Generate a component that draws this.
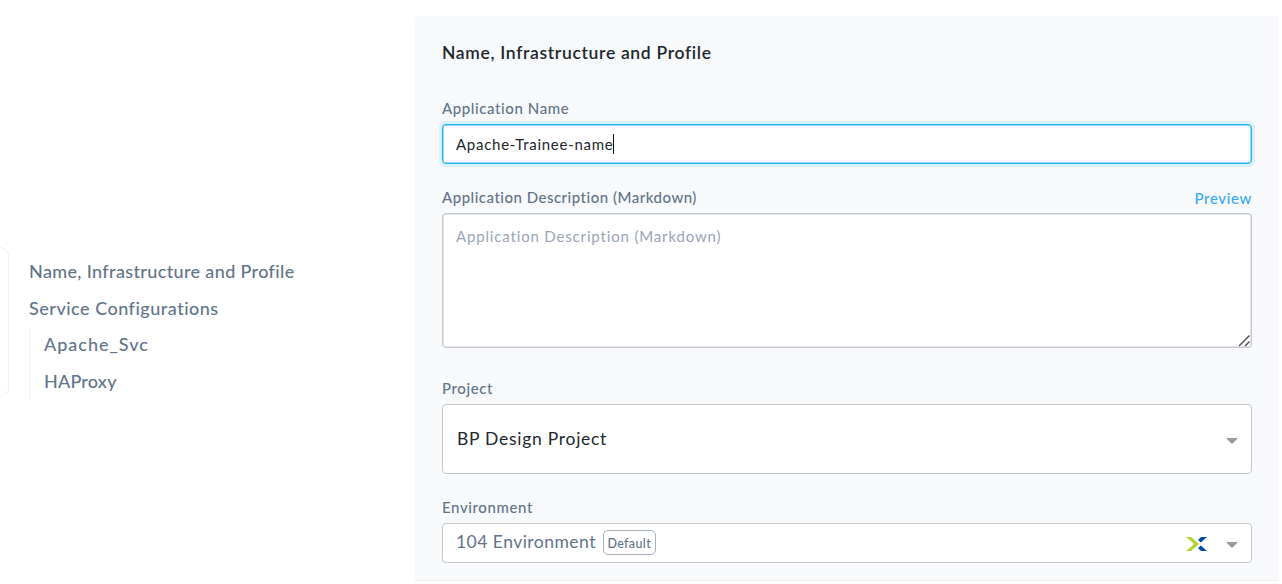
<div class="page">
  <aside>
    <div class="rail"></div>
    <nav>
      <span class="item first">Name, Infrastructure and Profile</span>
      <span class="item service">Service Configurations</span>
      <div class="sub">
        <span class="item apache">Apache_Svc</span>
        <span class="item haproxy">HAProxy</span>
      </div>
    </nav>
  </aside>
  <main>
    <h1>Name, Infrastructure and Profile</h1>
    <div class="label l1">Application Name</div>
    <div class="box name">Apache-Trainee-name<i class="caret"></i></div>
    <div class="label l2"><span>Application Description (Markdown)</span><span class="preview">Preview</span></div>
    <div class="box area">Application Description (Markdown)
      <svg class="grip" width="13" height="13" viewBox="0 0 13 13" fill="none" stroke="#555" stroke-width="1.5"><path d="M1 12 11.5 1.5M7 12l4.5-4.5" /></svg>
    </div>
    <div class="label l3">Project</div>
    <div class="box project"><span>BP Design Project</span><i class="arrow"></i></div>
    <div class="label l4">Environment</div>
    <div class="box env"><span>104 Environment</span><b>Default</b>
      <svg class="logo" width="21" height="14" viewBox="0 0 21 14"><path fill="#b0d235" d="M0 0h5l8 7-8 7H0l8-7z" /><path fill="#024da1" d="M15 0h6l-6.2 5.5-2.8-2.5zM12 11l2.8-2.5L21 14h-6z" /></svg>
      <i class="arrow"></i></div>
  </main>
</div>

<style>
  :global(body) { margin: 0; background: #fff; }
  .page { display: flex; width: 1282px; height: 584px; overflow: hidden; font-family: Lato, sans-serif; font-variant-ligatures: none; color: #627489; }
  aside { width: 415px; display: flex; align-items: flex-start; }
  .rail { box-sizing: border-box; width: 9px; height: 150px; margin-top: 247px; border: 1px solid #eff1f3; border-left: 0; border-radius: 0 12px 12px 0; }
  nav { margin: 253px 0 0 20px; font-size: 18px; font-weight: 500; }
  .item { display: block; height: 37px; line-height: 37px; white-space: nowrap; }
  .first { letter-spacing: .36px; }
  .service { letter-spacing: .5px; }
  .apache { letter-spacing: 1px; height: 36px; line-height: 35px; }
  .haproxy { letter-spacing: .2px; }
  .sub { border-left: 1px solid #eff1f3; padding-left: 14px; height: 73px; }
  main { box-sizing: border-box; width: 864px; height: 565px; margin-top: 16px; padding: 0 27px; background: #f7f9fb; border-radius: 4px 0 0 0; border-bottom: 1px solid #eef0f3; }
  h1 { margin: 0; padding-top: 23px; font-size: 17.5px; line-height: 27px; font-weight: 600; letter-spacing: .67px; color: #22272e; }
  .label { display: flex; justify-content: space-between; font-size: 15px; line-height: 20px; height: 20px; font-weight: 500; letter-spacing: .6px; }
  .l1 { margin-top: 32px; }
  .l2 { margin-top: 23px; letter-spacing: .5px; }
  .l3 { margin-top: 30px; }
  .l4 { margin-top: 23px; }
  .preview { color: #36a9f5; letter-spacing: .64px; padding-top: 1px; }
  .box { box-sizing: border-box; display: flex; align-items: center; background: #fff; border: 1px solid #c4c8cc; border-radius: 4px; padding: 0 13px; }
  .name { height: 40px; margin-top: 6px; border-color: #22b5ec; box-shadow: inset 0 0 0 .5px #22b5ec, 0 0 0 3px #d8eff9; color: #22272e; font-size: 15px; letter-spacing: .73px; }
  .caret { width: 1px; height: 20px; background: #111; }
  .area { height: 135px; margin-top: 6px; align-items: flex-start; padding-top: 13px; position: relative; color: #9aa5b5; font-size: 15px; letter-spacing: .84px; box-shadow: inset 0 0 0 .5px #c4c8cc; }
  .grip { position: absolute; right: 0; bottom: 0; }
  .project { height: 70px; margin-top: 6px; color: #22272e; font-size: 17.5px; letter-spacing: .73px; }
  .env { height: 40px; margin-top: 6px; font-size: 17.5px; letter-spacing: .47px; }
  .project > span { padding: 0 0 2px 1px; }
  .env > span { padding-bottom: 4px; }
  b { box-sizing: border-box; height: 25px; line-height: 25px; font-size: 12.5px; font-weight: 500; letter-spacing: .37px; border: 1px solid #a7b2c2; border-radius: 5px; margin: 0 0 2px 7px; padding: 0 3.5px; }
  .logo { margin: 2px 0 0 auto; }
  .arrow { border: 6px solid transparent; border-top-color: #999; border-bottom: 0; margin: 3px 0 0 auto; }
  .logo + .arrow { margin-left: 19px; }
</style>
